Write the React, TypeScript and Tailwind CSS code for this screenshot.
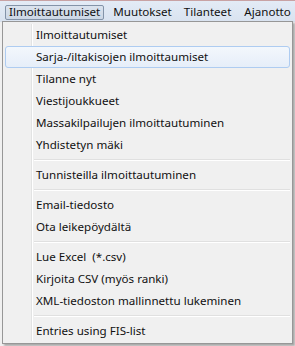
import React from "react";

type Entry = { label: string; hl?: boolean } | "sep";

const items: Entry[] = [
  { label: "Ilmoittautumiset" },
  { label: "Sarja-/iltakisojen ilmoittaumiset", hl: true },
  { label: "Tilanne nyt" },
  { label: "Viestijoukkueet" },
  { label: "Massakilpailujen ilmoittautuminen" },
  { label: "Yhdistetyn mäki" },
  "sep",
  { label: "Tunnisteilla ilmoittautuminen" },
  "sep",
  { label: "Email-tiedosto" },
  { label: "Ota leikepöydältä" },
  "sep",
  { label: "Lue Excel  (*.csv)" },
  { label: "Kirjoita CSV (myös ranki)" },
  { label: "XML-tiedoston mallinnettu lukeminen" },
  "sep",
  { label: "Entries using FIS-list" },
];

export default function App() {
  return (
    <div
      className="relative w-[295px] h-[346px] overflow-hidden bg-[#f0f0f0] text-[11.6px] text-[#111]"
      style={{ fontFamily: '"Noto Sans", "Open Sans", sans-serif' }}
    >
      <div className="h-[1px] bg-[#c8a2a4]" />
      <div className="flex h-[21px] items-center bg-gradient-to-b from-[#e3ebf6] to-[#d9e3f0] pl-[5px] border-b border-[#d5dfeb]">
        <div className="flex h-[15px] items-center rounded-[2px] border border-[#8393a8] bg-gradient-to-b from-[#dbe3ee] to-[#ccd7e5] px-[3px] mt-[2px] leading-none">
          <span className="whitespace-pre">Ilmoittautumiset</span>
        </div>
        <span className="ml-[9px] mt-[2px]">Muutokset</span>
        <span className="ml-[12px] mt-[2px]">Tilanteet</span>
        <span className="ml-[13px] mt-[2px]">Ajanotto</span>
      </div>

      <div className="absolute left-[2px] top-[21px] w-[291px] h-[323px] border border-[#979797] bg-[#f0f0f0] shadow-[2px_2px_2px_rgba(0,0,0,0.3)]">
        <div className="absolute left-[28px] top-[2px] bottom-[2px] w-[2px] border-l border-[#e2e3e3]">
          <div className="h-full w-[1px] bg-white" />
        </div>
        <div className="relative flex flex-col pt-[2px] px-[2px]">
          {items.map((it, i) =>
            it === "sep" ? (
              <div key={i} className="flex h-[8px] items-center pl-[29px]">
                <div className="h-[2px] w-full border-t border-[#e0e0e0]">
                  <div className="h-[1px] w-full bg-white" />
                </div>
              </div>
            ) : (
              <div
                key={i}
                className={
                  "flex h-[22px] items-center whitespace-pre " +
                  (it.hl
                    ? "rounded-[3px] border border-[#aeccf1] bg-gradient-to-b from-[#f3f7fc] to-[#e6eef9] pl-[30px]"
                    : "pl-[31px]")
                }
              >
                {it.label}
              </div>
            )
          )}
        </div>
      </div>
    </div>
  );
}
